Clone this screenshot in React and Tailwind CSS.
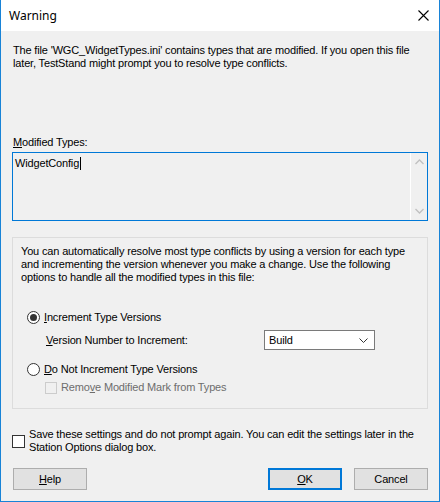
import React from "react";

const font = { fontFamily: '"Liberation Sans", Arial, sans-serif' };

function Radio({ checked }) {
  return (
    <div className="w-[13px] h-[13px] rounded-full border border-[#333333] bg-white flex items-center justify-center shrink-0">
      {checked && <div className="w-[7px] h-[7px] rounded-full bg-[#333333]" />}
    </div>
  );
}

export default function App() {
  return (
    <div
      className="w-[440px] h-[502px] bg-[#f0f0f0] border-x border-b border-[#1883d7] flex flex-col text-[11px] leading-[13px] tracking-[-0.16px] text-black"
      style={font}
    >
      {/* Title bar */}
      <div className="h-[31px] bg-white flex items-center justify-between pl-[8px] pr-[9px] shrink-0 tracking-normal">
        <span className="text-[12px] text-black" style={{ fontFamily: '"Noto Sans", "Open Sans", sans-serif' }}>Warning</span>
        <svg width="11" height="11" viewBox="0 0 11 11" className="mr-[1px]">
          <path d="M0.5 0.5 L10.5 10.5 M10.5 0.5 L0.5 10.5" stroke="#000" strokeWidth="1.1" />
        </svg>
      </div>

      <div className="flex flex-col px-[11px]">
        <p className="mt-[13px] pl-[1px] pr-[10px]">
          The file 'WGC_WidgetTypes.ini' contains types that are modified. If you open this file later, TestStand might prompt you to resolve type conflicts.
        </p>

        <div className="mt-[66px] pl-[1px]">
          <span className="underline">M</span>odified Types:
        </div>

        <div className="mt-[3px] h-[69px] border border-[#0078d7] flex">
          <div className="flex-1 pl-[2px] pt-[4px] flex items-start">
            <span>WidgetConfig</span>
            <span className="w-[1px] h-[13px] bg-black ml-[1px]" />
          </div>
          <div className="w-[17px] border-l border-white flex flex-col justify-between items-center py-[6px]">
            <svg width="9" height="6" viewBox="0 0 9 6"><path d="M0.5 5 L4.5 1 L8.5 5" stroke="#c0c0c0" strokeWidth="1.3" fill="none" /></svg>
            <svg width="9" height="6" viewBox="0 0 9 6"><path d="M0.5 1 L4.5 5 L8.5 1" stroke="#c0c0c0" strokeWidth="1.3" fill="none" /></svg>
          </div>
        </div>

        {/* Group box */}
        <div className="mt-[16px] h-[172px] border border-[#dcdcdc] flex flex-col px-[8px]">
          <p className="mt-[7px] pr-[4px]">
            You can automatically resolve most type conflicts by using a version for each type and incrementing the version whenever you make a change. Use the following options to handle all the modified types in this file:
          </p>

          <div className="mt-[27px] flex items-center gap-[4px] pl-[6px]">
            <Radio checked />
            <span><span className="underline">I</span>ncrement Type Versions</span>
          </div>

          <div className="mt-[6px] flex items-center pl-[25px]">
            <span className="w-[218px]"><span className="underline">V</span>ersion Number to Increment:</span>
            <div className="w-[111px] h-[20px] bg-white border border-[#7a7a7a] flex items-center justify-between pl-[4px] pr-[6px]">
              <span>Build</span>
              <svg width="9" height="5" viewBox="0 0 9 5"><path d="M0.5 0.5 L4.5 4.5 L8.5 0.5" stroke="#333" strokeWidth="1" fill="none" /></svg>
            </div>
          </div>

          <div className="mt-[13px] flex items-center gap-[4px] pl-[6px]">
            <Radio />
            <span><span className="underline">D</span>o Not Increment Type Versions</span>
          </div>

          <div className="mt-[5px] flex items-center gap-[4px] pl-[24px] text-[#6d6d6d]">
            <div className="w-[12px] h-[12px] border border-[#cccccc] bg-[#f0f0f0]" />
            <span>Remo<span className="underline">v</span>e Modified Mark from Types</span>
          </div>
        </div>

        {/* Save checkbox */}
        <div className="mt-[19px] flex items-start">
          <div className="w-[13px] h-[13px] border border-[#333333] bg-white mt-[7px] shrink-0" />
          <p className="ml-[4px] pr-[2px]">
            Save these settings and do not prompt again. You can edit the settings later in the Station Options dialog box.
          </p>
        </div>

        {/* Buttons */}
        <div className="mt-[14px] flex items-center pl-[1px]">
          <div className="w-[74px] h-[22px] bg-[#e1e1e1] border border-[#adadad] flex items-center justify-center">
            <span><span className="underline">H</span>elp</span>
          </div>
          <div className="flex-1" />
          <div className="w-[74px] h-[22px] bg-[#e1e1e1] border-2 border-[#0078d7] flex items-center justify-center">
            <span><span className="underline">O</span>K</span>
          </div>
          <div className="w-[74px] h-[22px] ml-[12px] bg-[#e1e1e1] border border-[#adadad] flex items-center justify-center">
            <span>Cancel</span>
          </div>
        </div>
      </div>
    </div>
  );
}
